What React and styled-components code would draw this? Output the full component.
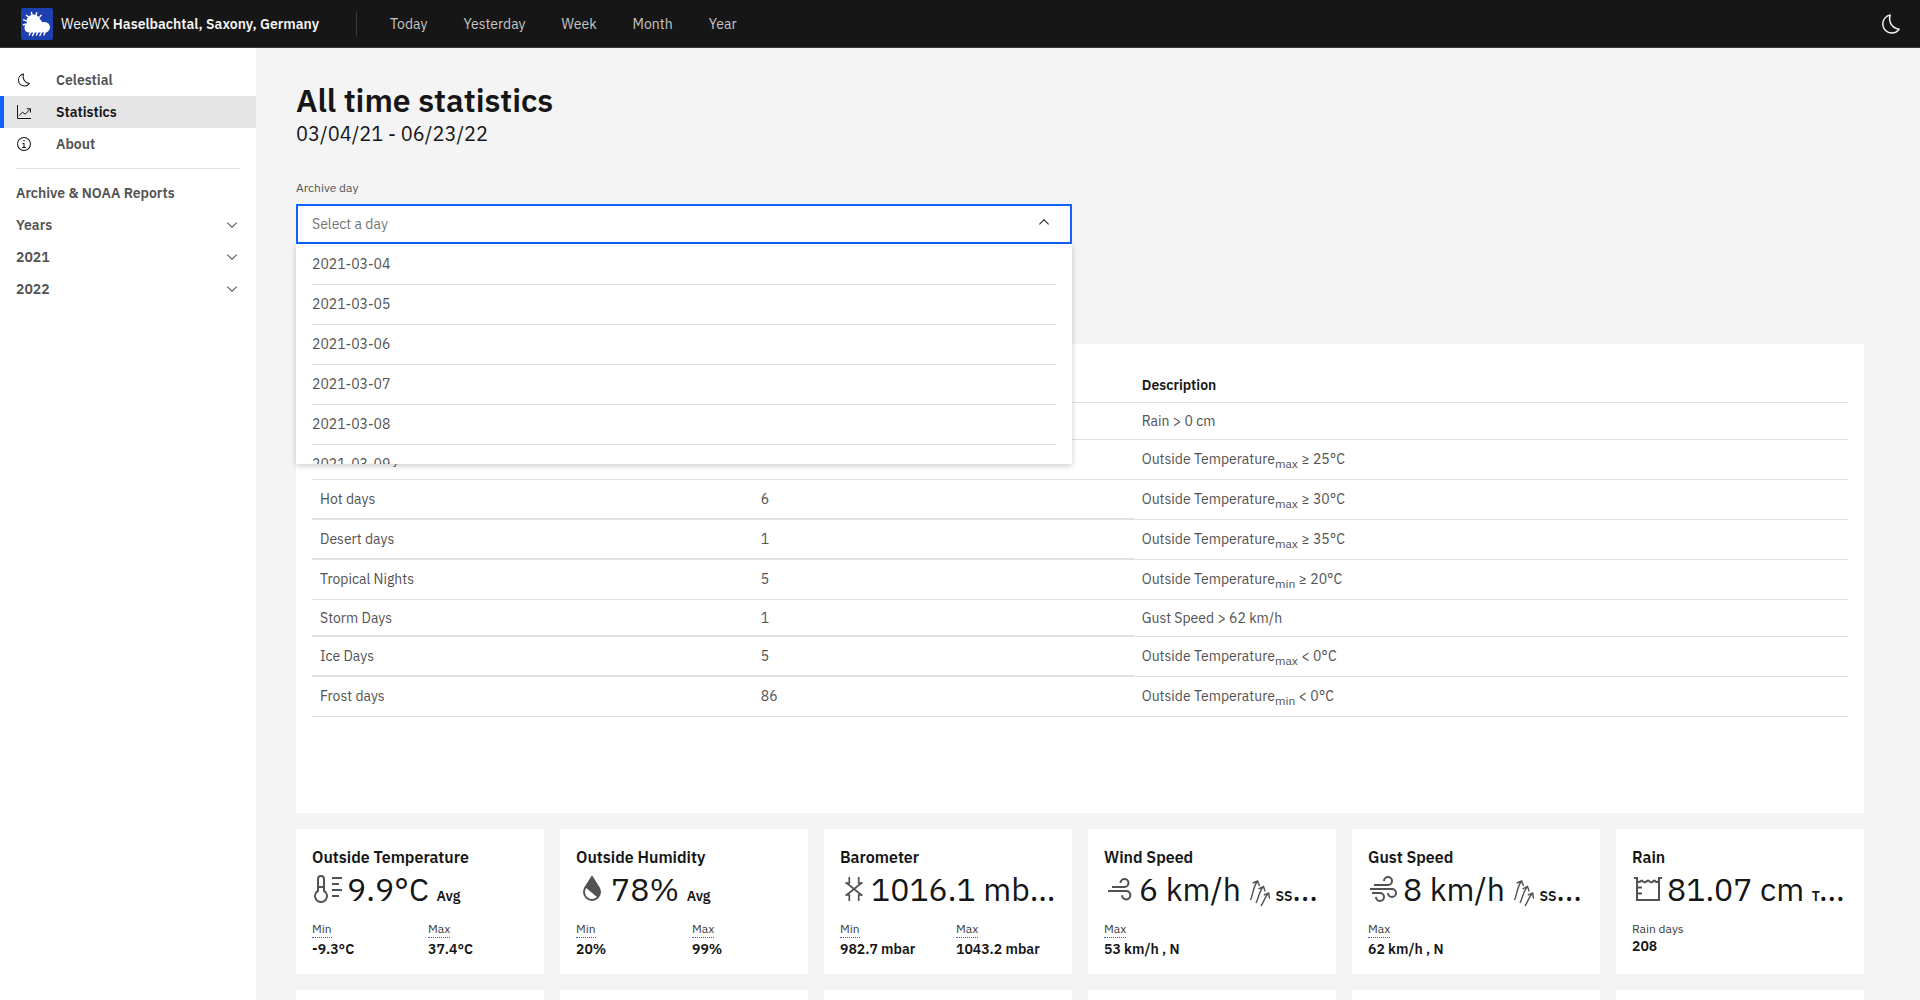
import React from "react";
import styled, { createGlobalStyle, css } from "styled-components";

const color = {
  background: "#f4f4f4",
  layer: "#ffffff",
  border: "#e0e0e0",
  textPrimary: "#161616",
  textSecondary: "#525252",
  placeholder: "#757575",
  interactive: "#0f62fe",
};

const GlobalStyle = createGlobalStyle`
  *, *::before, *::after { box-sizing: border-box; }
  body {
    margin: 0;
    background: ${color.background};
    color: ${color.textPrimary};
    font-family: "IBM Plex Sans", Roboto, "Liberation Sans", sans-serif;
    font-size: 14px;
    line-height: 18px;
    text-rendering: optimizeLegibility;
  }
  h1, h2, p, ul, dl, dd { margin: 0; padding: 0; }
  ul { list-style: none; }
  a { color: inherit; text-decoration: none; }
  strong { font-weight: 600; }
  button, input { font: inherit; color: inherit; border: 0; padding: 0; background: none; }
`;

/* ---------- shell ---------- */

const Shell = styled.div`
  display: flex;
  flex-direction: column;
  height: 100vh;
`;

const Header = styled.header`
  display: flex;
  align-items: center;
  flex: none;
  height: 48px;
  padding: 0 16px 0 21px;
  background: #161616;
  border-bottom: 1px solid #393939;
  color: #c6c6c6;
`;

const Brand = styled.a`
  display: flex;
  align-items: center;
  gap: 8px;
  min-width: 335px;
  color: #f4f4f4;
`;

const HeaderNav = styled.nav`
  display: flex;
  align-items: center;
  gap: 36px;
  padding-left: 34px;
  position: relative;

  &::before {
    content: "";
    position: absolute;
    left: 0;
    height: 24px;
    width: 1px;
    background: #393939;
  }
`;

const ThemeButton = styled.button`
  display: flex;
  align-items: center;
  justify-content: center;
  width: 26px;
  height: 26px;
  margin-left: auto;
  color: #f4f4f4;
`;

const Body = styled.div`
  display: flex;
  flex: 1;
  min-height: 0;
`;

const SideNav = styled.nav`
  flex: none;
  width: 256px;
  padding-top: 16px;
  background: ${color.layer};
  color: ${color.textSecondary};
  font-weight: 600;
`;

const SideLink = styled.a`
  display: flex;
  align-items: center;
  gap: 24px;
  height: 32px;
  padding: 0 16px;
  border-left: 0 solid ${color.interactive};

  svg { color: #161616; }

  ${(p) =>
    p.$active &&
    css`
      padding-left: 12px;
      border-left-width: 4px;
      background: #e5e5e5;
      color: ${color.textPrimary};
    `}
`;

const SideDivider = styled.hr`
  height: 1px;
  margin: 8px 16px;
  border: 0;
  background: ${color.border};
`;

const SideHeading = styled.h2`
  padding: 7px 16px;
  font-size: 14px;
  line-height: 18px;
  font-weight: 600;
`;

const SideToggle = styled.button`
  display: flex;
  align-items: center;
  justify-content: space-between;
  width: 100%;
  height: 32px;
  padding: 0 16px;
`;

const Main = styled.main`
  flex: 1;
  min-width: 0;
  padding: 32px 56px 32px 40px;
  overflow-y: auto;
  scrollbar-width: none;
`;

/* ---------- page heading and day picker ---------- */

const Title = styled.h1`
  font-size: 32px;
  line-height: 40px;
  font-weight: 600;
`;

const Subtitle = styled.p`
  font-size: 20px;
  line-height: 28px;
`;

const FilterRow = styled.div`
  display: grid;
  grid-template-columns: 1fr 1fr;
  gap: 16px;
  margin: 32px 0 100px;
`;

const FieldLabel = styled.label`
  display: block;
  margin-bottom: 8px;
  color: ${color.textSecondary};
  font-size: 12px;
  line-height: 16px;
`;

const Combo = styled.div`
  position: relative;
`;

const ComboField = styled.div`
  display: flex;
  align-items: center;
  height: 40px;
  padding: 0 14px;
  border: 2px solid ${color.interactive};
  background: ${color.layer};
`;

const ComboInput = styled.input`
  flex: 1;
  min-width: 0;
  outline: none;

  &::placeholder { color: ${color.placeholder}; opacity: 1; }
`;

const ComboToggle = styled.button`
  display: flex;
  align-items: center;
  justify-content: center;
  width: 24px;
  height: 24px;
  padding-bottom: 4px;
`;

const ComboMenu = styled.ul`
  position: absolute;
  z-index: 1;
  top: 100%;
  left: 0;
  right: 0;
  max-height: 220px;
  overflow-y: auto;
  scrollbar-width: none;
  background: ${color.layer};
  box-shadow: 0 2px 6px rgba(0, 0, 0, 0.2);
  color: ${color.textSecondary};
`;

const Option = styled.li`
  height: 40px;
  margin: 0 16px;
  padding: 10px 0;
  border-top: 1px solid ${(p) => (p.$first ? "transparent" : color.border)};
`;

/* ---------- climate day table ---------- */

const Panel = styled.section`
  padding: 16px 16px 96px;
  margin-bottom: 16px;
  background: ${color.layer};
`;

const Table = styled.table`
  width: 100%;
  table-layout: fixed;
  border-collapse: separate;
  border-spacing: 0;
  text-align: left;
  color: ${color.textSecondary};
`;

const HeadCell = styled.th`
  width: ${(p) => p.$width};
  padding: 16px 8px 8px;
  border-bottom: 1px solid ${color.border};
  color: ${color.textPrimary};
  font-weight: 600;
`;

const Row = styled.tr`
  height: ${(p) => (p.$tall ? 40 : 37)}px;

  td { padding-top: ${(p) => (p.$tall ? 10 : 9)}px; }
`;

const Cell = styled.td`
  padding: 0 8px;
  border-bottom: ${(p) => (p.$heavy ? 2 : 1)}px solid ${color.border};
  vertical-align: top;
`;

const Sub = styled.sub`
  font-size: 12px;
  line-height: 0;
`;

/* ---------- summary cards ---------- */

const CardGrid = styled.div`
  display: grid;
  grid-template-columns: repeat(6, minmax(0, 1fr));
  gap: 16px;
`;

const Card = styled.section`
  min-height: 145px;
  padding: 16px;
  background: ${color.layer};
`;

const CardTitle = styled.h2`
  font-size: 16px;
  line-height: 24px;
  font-weight: 600;
`;

const Reading = styled.p`
  margin-bottom: 12px;
  font-size: 32px;
  line-height: 40px;
  white-space: nowrap;
  overflow: hidden;
  text-overflow: ellipsis;

  svg { color: ${color.textSecondary}; }
`;

const ReadingNote = styled.span`
  font-size: 14px;
  line-height: 0;
  font-weight: 600;
`;

const Stats = styled.dl`
  display: grid;
  grid-template-columns: 1fr 1fr;
  gap: 16px;
`;

const StatLabel = styled.dt`
  display: flex;
  font-size: 12px;
  line-height: 16px;
  color: #393939;
`;

const Dated = styled.span`
  margin-bottom: 2px;
  border-bottom: 1px dotted ${color.interactive};
  cursor: help;
`;

const StatValue = styled.dd`
  font-weight: 600;
  white-space: nowrap;
`;

/* ---------- icons ---------- */

const Solid = styled.svg.attrs({ viewBox: "0 0 32 32", "aria-hidden": true })`
  flex: none;
  width: ${(p) => p.$size}px;
  height: ${(p) => p.$size}px;
  fill: currentColor;
`;

const Stroked = styled(Solid)`
  fill: none;
  stroke: currentColor;
  stroke-width: 2;
`;

const readingIcon = css`
  margin-right: 3px;
  vertical-align: -4px;
`;

const ReadingSolid = styled(Solid)`
  ${readingIcon}
`;

const ReadingStroked = styled(Stroked)`
  ${readingIcon}
`;

const PressureSvg = styled.svg`
  ${readingIcon}
  width: 28px;
  height: 32px;
  fill: none;
  stroke: currentColor;
  stroke-width: 1.7;
`;

const DirectionSvg = styled.svg`
  width: 22px;
  height: 30px;
  margin-right: 5px;
  vertical-align: -7px;
  fill: none;
  stroke: currentColor;
  stroke-width: 1.4;
`;

const Logo = () => (
  <svg width="32" height="32" viewBox="0 0 32 32" aria-hidden="true">
    <rect width="32" height="32" rx="2" fill="#1e40af" />
    <g stroke="#fff" strokeWidth="1.4" strokeLinecap="round">
      <path d="M11.2 7.5 10.4 4.4M15 7.5l.7-2.8M7.8 9.5 5.4 7.2M5.6 12.8l-3-1M5.4 16l-3 .8M18.2 9.4l2-2.2" />
      <path d="M9.6 24l-1.3 3M13.2 24l-1.6 3.6M16.8 24l-1.3 3M20.6 24l-1.8 3.6M24.2 24l-1.3 3" />
    </g>
    <circle cx="12.4" cy="13.2" r="6.8" fill="#fff" />
    <path
      d="M8 24.5a4.6 4.6 0 0 1-1.2-9c.6-3.4 3.6-6 7.4-6 3.4 0 6.2 2 7.2 5 .8-.3 1.6-.4 2.4-.4a5.2 5.2 0 0 1 0 10.4z"
      fill="#fff"
    />
  </svg>
);

const MoonIcon = ({ size }) => (
  <Solid $size={size}>
    <path d="M13.5025,5.4136A15.0755,15.0755,0,0,0,25.096,23.6082a11.1134,11.1134,0,0,1-7.9749,3.3893c-.1385,0-.2782.0051-.4178,0A11.0944,11.0944,0,0,1,13.5025,5.4136M14.98,3a1.0024,1.0024,0,0,0-.1746.0156A13.0959,13.0959,0,0,0,16.63,28.9973c.1641.006.3282,0,.4909,0a13.0724,13.0724,0,0,0,10.702-5.5556,1.0094,1.0094,0,0,0-.7833-1.5644A13.08,13.08,0,0,1,15.8892,4.38,1.0149,1.0149,0,0,0,14.98,3Z" />
  </Solid>
);

const ChartIcon = () => (
  <Stroked $size={16}>
    <path d="M3 2V29H30M6 23.5 13 16.5 18.5 20.5 28.5 10M21.5 9.5H29V17" />
  </Stroked>
);

const InfoIcon = () => (
  <Solid $size={16}>
    <path d="M17 22V14H13v2h2v6H12v2h8V22zM16 8a1.5 1.5 0 1 0 1.5 1.5A1.5 1.5 0 0 0 16 8z" />
    <path d="M16 30A14 14 0 1 1 30 16 14 14 0 0 1 16 30zM16 4A12 12 0 1 0 28 16 12 12 0 0 0 16 4z" />
  </Solid>
);

const ChevronDown = () => (
  <Solid $size={16}>
    <path d="M16 22 6 12 7.4 10.6 16 19.2 24.6 10.6 26 12z" />
  </Solid>
);

const ChevronUp = () => (
  <Solid $size={16}>
    <path d="M16 10 26 20 24.6 21.4 16 12.8 7.4 21.4 6 20z" />
  </Solid>
);

const TemperatureIcon = () => (
  <ReadingSolid $size={32}>
    <path d="M13 17.26V6a4 4 0 0 0-8 0v11.26a7 7 0 1 0 8 0zM9 4a2 2 0 0 1 2 2v7H7V6a2 2 0 0 1 2-2zm0 24a5 5 0 0 1-2.5-9.33l.5-.28V15h4v3.39l.5.28A5 5 0 0 1 9 28zM20 4h10v2H20zM20 10h7v2H20zM20 16h10v2H20zM20 22h7v2H20z" />
  </ReadingSolid>
);

const HumidityIcon = () => (
  <ReadingSolid $size={32}>
    <path
      fillRule="evenodd"
      d="M23.476 13.994 16.847 3.437a1.04 1.04 0 0 0-1.694 0L8.494 14.044A9.986 9.986 0 0 0 7 19a9 9 0 0 0 18 0 10.063 10.063 0 0 0-1.524-5.006zM16 26a7 7 0 0 1-7-7 7.98 7.98 0 0 1 1.18-3.89L20.95 24A7 7 0 0 1 16 26z"
    />
  </ReadingSolid>
);

const PressureIcon = () => (
  <PressureSvg viewBox="0 0 28 32" aria-hidden="true">
    <path d="M9.3 4v6H5.3M18.7 4v6h4M9.3 28v-6H5.3M18.7 28v-6h4M6 9.5l16 13M22 9.5 6 22.5" />
  </PressureSvg>
);

const WindIcon = () => (
  <ReadingStroked $size={32}>
    <path d="M8 14h12.5a4 4 0 1 0-4-4M4 18h18a4.2 4.2 0 1 1-4 4.2" />
  </ReadingStroked>
);

const GustIcon = () => (
  <ReadingStroked $size={32}>
    <path d="M6 12h14a4 4 0 1 0-4-4M2 16h22a4 4 0 1 1-4 4M4 20h8a4 4 0 1 1-4 4" />
  </ReadingStroked>
);

const RainIcon = () => (
  <ReadingStroked $size={32}>
    <path d="M2 5H5V27H27V5H30M5 14.5h5M5 20.5h5M5 8q2 2 4 0 1-1 1.5 0 2 2.5 4.5 0 1-1 2 0 2 2.5 4.5 0 1-1 1.5 0 2 2 4 0" />
  </ReadingStroked>
);

const DirectionIcon = () => (
  <DirectionSvg viewBox="0 0 22 30" aria-hidden="true">
    <path d="M1.5 22C4 17 4 9 8.2 3.5M3.500 5.2 8.600 3l2 5M7 25C9.500 20.500 10 14 14 8.800M9.500 10.800 14.500 8.500l1.600 4.800M12 28C14.500 24.500 15.500 20 19 15.500M14.800 17.200 19.600 15l1 5.500" />
  </DirectionSvg>
);

/* ---------- content ---------- */

const PERIODS = ["Today", "Yesterday", "Week", "Month", "Year"];

const PAGES = [
  { name: "Celestial", icon: <MoonIcon size={16} /> },
  { name: "Statistics", icon: <ChartIcon />, active: true },
  { name: "About", icon: <InfoIcon /> },
];

const REPORTS = ["Years", "2021", "2022"];

const DAYS = ["2021-03-04", "2021-03-05", "2021-03-06", "2021-03-07", "2021-03-08", "2021-03-09"];

const temperature = (bound, rest) => (
  <>
    Outside Temperature<Sub>{bound}</Sub> {rest}
  </>
);

const CLIMATE = [
  { name: "Rain days", count: "208", rule: "Rain > 0 cm" },
  { name: "Summer days", count: "", rule: temperature("max", "≥ 25°C"), tall: true },
  { name: "Hot days", count: "6", rule: temperature("max", "≥ 30°C"), tall: true, heavy: true },
  { name: "Desert days", count: "1", rule: temperature("max", "≥ 35°C"), tall: true, heavy: true },
  { name: "Tropical Nights", count: "5", rule: temperature("min", "≥ 20°C"), tall: true },
  { name: "Storm Days", count: "1", rule: "Gust Speed > 62 km/h", heavy: true },
  { name: "Ice Days", count: "5", rule: temperature("max", "< 0°C"), tall: true, heavy: true },
  { name: "Frost days", count: "86", rule: temperature("min", "< 0°C"), tall: true },
];

const CARDS = [
  {
    title: "Outside Temperature",
    icon: <TemperatureIcon />,
    value: "9.9°C",
    note: "Avg",
    stats: [["Min", "-9.3°C"], ["Max", "37.4°C"]],
  },
  {
    title: "Outside Humidity",
    icon: <HumidityIcon />,
    value: "78%",
    note: "Avg",
    stats: [["Min", "20%"], ["Max", "99%"]],
  },
  {
    title: "Barometer",
    icon: <PressureIcon />,
    value: "1016.1 mbar",
    note: "Avg",
    stats: [["Min", "982.7 mbar"], ["Max", "1043.2 mbar"]],
  },
  {
    title: "Wind Speed",
    icon: <WindIcon />,
    value: "6 km/h",
    direction: true,
    note: "SSW Avg",
    stats: [["Max", "53 km/h , N"]],
  },
  {
    title: "Gust Speed",
    icon: <GustIcon />,
    value: "8 km/h",
    direction: true,
    note: "SSW Avg",
    stats: [["Max", "62 km/h , N"]],
  },
  {
    title: "Rain",
    icon: <RainIcon />,
    value: "81.07 cm",
    note: "Total rain",
    undated: true,
    stats: [["Rain days", "208"]],
  },
];

export default function App() {
  return (
    <Shell>
      <GlobalStyle />
      <Header>
        <Brand href="#">
          <Logo />
          <span>
            WeeWX <strong>Haselbachtal, Saxony, Germany</strong>
          </span>
        </Brand>
        <HeaderNav aria-label="Periods">
          {PERIODS.map((period) => (
            <a key={period} href="#">{period}</a>
          ))}
        </HeaderNav>
        <ThemeButton type="button" aria-label="Toggle dark mode">
          <MoonIcon size={24} />
        </ThemeButton>
      </Header>
      <Body>
        <SideNav aria-label="Pages">
          {PAGES.map((page) => (
            <SideLink key={page.name} href="#" $active={page.active}>
              {page.icon}
              {page.name}
            </SideLink>
          ))}
          <SideDivider />
          <SideHeading>Archive &amp; NOAA Reports</SideHeading>
          {REPORTS.map((report) => (
            <SideToggle key={report} type="button" aria-expanded="false">
              {report}
              <ChevronDown />
            </SideToggle>
          ))}
        </SideNav>
        <Main>
          <Title>All time statistics</Title>
          <Subtitle>03/04/21 - 06/23/22</Subtitle>

          <FilterRow>
            <div>
              <FieldLabel htmlFor="archive-day">Archive day</FieldLabel>
              <Combo>
                <ComboField>
                  <ComboInput
                    id="archive-day"
                    role="combobox"
                    aria-expanded="true"
                    aria-controls="archive-days"
                    placeholder="Select a day"
                  />
                  <ComboToggle type="button" aria-label="Close menu">
                    <ChevronUp />
                  </ComboToggle>
                </ComboField>
                <ComboMenu id="archive-days" role="listbox">
                  {DAYS.map((day, index) => (
                    <Option key={day} role="option" $first={index === 0}>{day}</Option>
                  ))}
                </ComboMenu>
              </Combo>
            </div>
          </FilterRow>

          <Panel>
            <Table>
              <thead>
                <tr>
                  <HeadCell $width="28.7%">Name</HeadCell>
                  <HeadCell $width="24.8%">Days</HeadCell>
                  <HeadCell>Description</HeadCell>
                </tr>
              </thead>
              <tbody>
                {CLIMATE.map((row) => (
                  <Row key={row.name} $tall={row.tall}>
                    <Cell $heavy={row.heavy}>{row.name}</Cell>
                    <Cell $heavy={row.heavy}>{row.count}</Cell>
                    <Cell>{row.rule}</Cell>
                  </Row>
                ))}
              </tbody>
            </Table>
          </Panel>

          <CardGrid>
            {CARDS.map((card) => (
              <Card key={card.title}>
                <CardTitle>{card.title}</CardTitle>
                <Reading>
                  {card.icon}
                  {card.value} {card.direction && <DirectionIcon />}
                  <ReadingNote>{card.note}</ReadingNote>
                </Reading>
                <Stats>
                  {card.stats.map(([label, value]) => (
                    <div key={label}>
                      <StatLabel>{card.undated ? label : <Dated>{label}</Dated>}</StatLabel>
                      <StatValue>{value}</StatValue>
                    </div>
                  ))}
                </Stats>
              </Card>
            ))}
            {CARDS.map((card) => (
              <Card key={`${card.title} chart`} />
            ))}
          </CardGrid>
        </Main>
      </Body>
    </Shell>
  );
}
